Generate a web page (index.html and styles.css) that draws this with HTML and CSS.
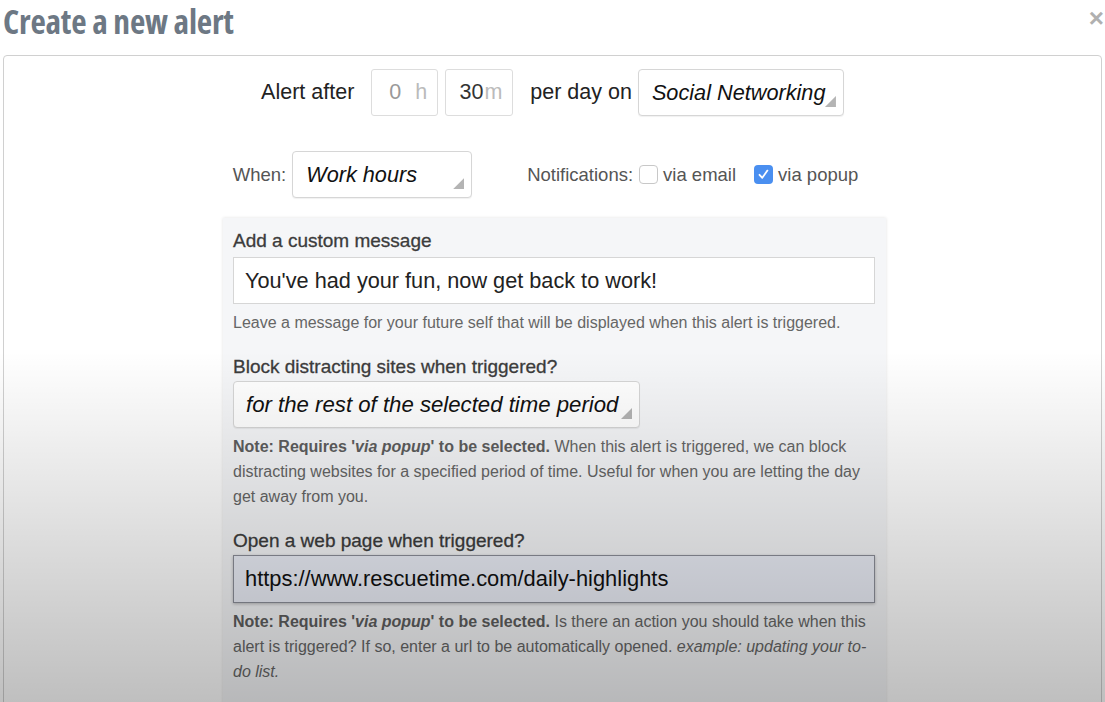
FILE: index.html
```html
<html><head>
<title>Create a new alert</title>
<link rel="stylesheet" href="styles.css">
</head><body>

<div class="header">
  <h1>Create a new alert</h1>
  <span class="close">&times;</span>
</div>

<div class="panel">

  <div class="row first">
    <span class="big">Alert after</span>
    <span class="timebox hours"><span class="num">0</span><span class="unit">h</span></span>
    <span class="timebox mins"><span class="num">30</span><span class="unit">m</span></span>
    <span class="big perday">per day on</span>
    <span class="select category">Social Networking</span>
  </div>

  <div class="row second">
    <span class="small">When:</span>
    <span class="select when">Work hours</span>
    <span class="small notif">Notifications:</span>
    <span class="check"></span>
    <span class="small">via email</span>
    <span class="check on"><svg width="19" height="19" viewBox="0 0 19 19"><path d="M5.5 9.8 L8.3 12.8 L13.4 5.6" fill="none" stroke="#ffffff" stroke-width="1.8" stroke-linecap="round" stroke-linejoin="round"/></svg></span>
    <span class="small">via popup</span>
  </div>

  <div class="options">
    <div class="label">Add a custom message</div>
    <div class="textbox">You've had your fun, now get back to work!</div>
    <div class="help">Leave a message for your future self that will be displayed when this alert is triggered.</div>

    <div class="label gap">Block distracting sites when triggered?</div>
    <span class="select block">for the rest of the selected time period</span>
    <div class="help"><b>Note: Requires '<i>via popup</i>' to be selected.</b> When this alert is triggered, we can block distracting websites for a specified period of time. Useful for when you are letting the day get away from you.</div>

    <div class="label gap">Open a web page when triggered?</div>
    <div class="textbox url">https://www.rescuetime.com/daily-highlights</div>
    <div class="help"><b>Note: Requires '<i>via popup</i>' to be selected.</b> Is there an action you should take when this alert is triggered? If so, enter a url to be automatically opened. <i>example: updating your to-do list.</i></div>
  </div>

</div>

<div class="shade"></div>

</body></html>
```

FILE: styles.css
```css
body {
  margin:0;
  background-color:#ffffff;
  font-family:"Liberation Sans", Arial, sans-serif;
  color:#222222;
  overflow:hidden;
  height:702px;
}
.header {
  display:flex;
  justify-content:space-between;
  align-items:flex-start;
  height:55px;
  padding-left:3px;
}
h1 {
  margin:0;
  padding-top:1px;
  font-family:"Open Sans", sans-serif;
  font-weight:700;
  font-size:33.5px;
  font-stretch:75%;
  letter-spacing:-0.2px;
  color:#6d7884;
  line-height:40px;
}
.close {
  font-size:26px;
  font-weight:bold;
  color:#b0b0b0;
  line-height:36px;
  padding-right:1px;
}
.panel {
  margin-left:3px;
  margin-right:3px;
  border:1px solid #d0d0d0;
  border-radius:4px;
  height:700px;
  padding-top:13px;
}
.row {
  display:flex;
  align-items:center;
  justify-content:center;
}
.row.second {
  margin-top:35px;
  padding-right:14px;
}
.big {
  font-size:21.5px;
  color:#222222;
  margin-right:17px;
}
.big.perday {
  margin-left:17px;
  margin-right:6px;
}
.small {
  font-size:18.5px;
  color:#555555;
}
.small.notif {
  margin-left:55px;
}
.timebox {
  display:flex;
  justify-content:flex-end;
  align-items:center;
  box-sizing:border-box;
  height:47px;
  border:1px solid #dddddd;
  border-radius:3px;
  padding-right:10px;
  font-size:21.5px;
}
.timebox.hours {
  width:67px;
  margin-right:7px;
}
.timebox.mins {
  width:68px;
}
.timebox .num {
  color:#333333;
}
.timebox.hours .num {
  color:#999999;
  margin-right:14px;
}
.timebox.mins .num {
  margin-right:1px;
}
.timebox .unit {
  color:#bbbbbb;
}
.select {
  position:relative;
  display:flex;
  align-items:center;
  box-sizing:border-box;
  height:47px;
  border:1px solid #d6d6d6;
  border-radius:4px;
  background-color:#ffffff;
  box-shadow:0 1px 1px rgba(0,0,0,0.06);
  font-size:21.7px;
  font-style:italic;
  color:#111111;
  padding-left:13px;
}
.select::after {
  content:"";
  position:absolute;
  right:7px;
  bottom:8px;
  width:11px;
  height:11px;
  background-color:#b4b4b4;
  clip-path:polygon(100% 0, 100% 100%, 0 100%);
}
.select.category {
  width:206px;
}
.select.when {
  width:180px;
  margin-left:6px;
}
.select.block {
  width:407px;
  font-size:22.2px;
  padding-left:12px;
}
.check {
  display:inline-block;
  box-sizing:border-box;
  width:19px;
  height:19px;
  border:1px solid #c8c8c8;
  border-radius:4px;
  background-color:#ffffff;
  margin-left:6px;
  margin-right:5px;
}
.check.on {
  margin-left:18px;
  border:none;
  background-color:#4a8ff0;
}
.check svg {
  display:block;
}
.options {
  width:663px;
  height:520px;
  box-sizing:border-box;
  margin-top:20px;
  margin-left:219px;
  padding:11px 11px 20px 10px;
  background-color:#f5f6f8;
  box-shadow:0 0 3px rgba(0,0,0,0.12);
}
.label {
  font-size:19px;
  line-height:24px;
  color:#3c3c3c;
  -webkit-text-stroke:0.3px #3c3c3c;
  margin-bottom:4px;
}
.label.gap {
  margin-top:20px;
  margin-bottom:2px;
}
.textbox {
  display:flex;
  align-items:center;
  box-sizing:border-box;
  height:47px;
  border:1px solid #d6d6d6;
  background-color:#ffffff;
  padding-left:11px;
  font-size:21.7px;
  color:#222222;
}
.textbox.url {
  margin-top:1px;
  height:48px;
  border:1px solid #8c8f99;
  background-color:#eceff8;
  box-shadow:0 1px 3px rgba(0,0,0,0.25);
  color:#111111;
  font-size:21.9px;
}
.help {
  margin-top:6px;
  font-size:16px;
  line-height:25px;
  color:#666666;
}
.help b {
  color:#5e5e5e;
}
.shade {
  position:absolute;
  left:0;
  top:0;
  width:100%;
  height:702px;
  pointer-events:none;
  background:linear-gradient(to bottom, rgba(0,0,0,0) 0, rgba(0,0,0,0) 50%, rgba(0,0,0,0.25) 100%);
}
```
